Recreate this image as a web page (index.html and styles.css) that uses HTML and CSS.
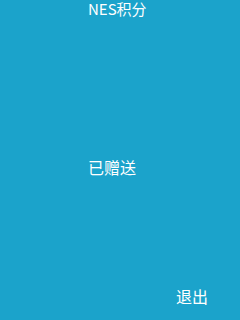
FILE: index.html
```html
<!DOCTYPE html>
<html>

<head>
    <title>NES积分</title>
    <link rel="stylesheet" href="styles.css">
</head>

<body>
    <div class="screen">
        <div class="title">NES积分</div>
        <div class="status">已赠送</div>
        <div class="footer">
            <span class="exit">退出</span>
        </div>
    </div>
</body>

</html>
```

FILE: styles.css
```css
body {
    margin: 0;
    padding: 0;
    background-color: #1ba3cb;
    font-family: "Noto Sans CJK SC", "DejaVu Sans", sans-serif;
    color: #fff;
}

.screen {
    width: 240px;
    height: 320px;
    display: flex;
    flex-direction: column;
}

.title {
    height: 18px;
    line-height: 18px;
    font-size: 15px;
    padding-left: 88px;
}

.status {
    margin-top: 141px;
    height: 16px;
    line-height: 16px;
    font-size: 16px;
    padding-left: 88px;
}

.footer {
    margin-top: auto;
    height: 32px;
    display: flex;
    justify-content: flex-end;
    padding-right: 32px;
    padding-bottom: 2px;
    box-sizing: border-box;
}

.exit {
    font-size: 16px;
    line-height: 16px;
}
```
